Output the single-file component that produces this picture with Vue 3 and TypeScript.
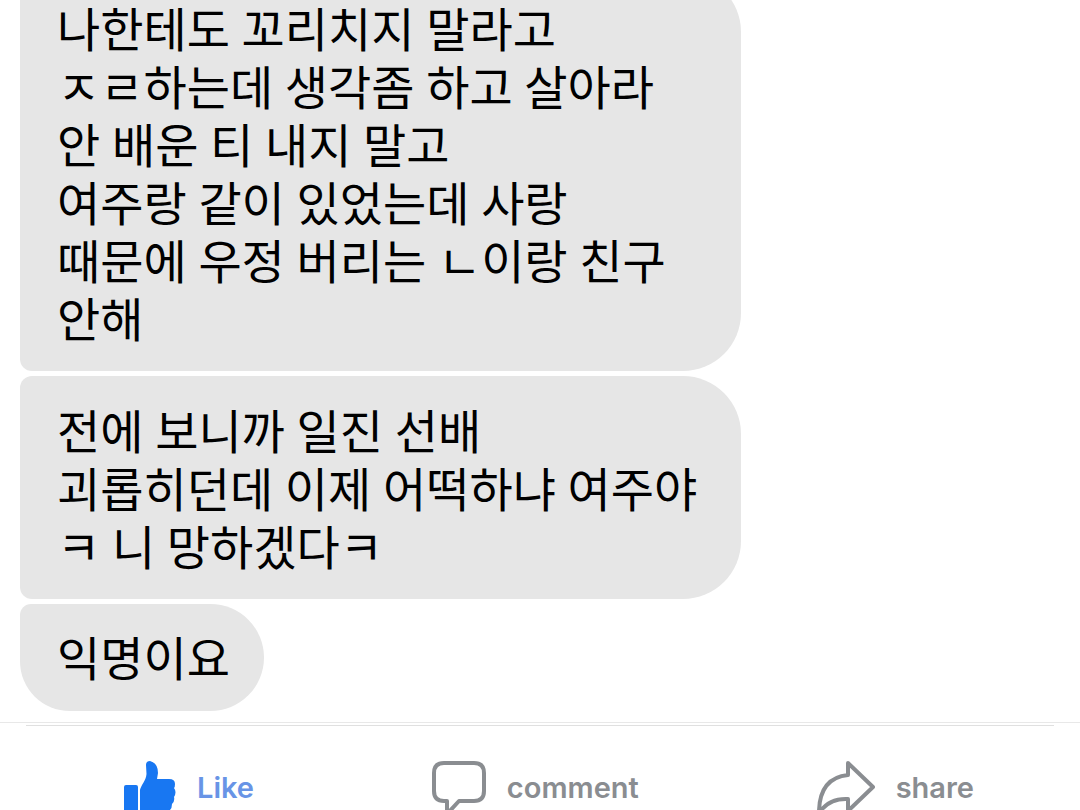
<script setup lang="ts">
interface Message {
  cls: string
  lines: string[]
}

const messages: Message[] = [
  {
    cls: 'first',
    lines: [
      '나한테도 꼬리치지 말라고',
      'ㅈㄹ하는데 생각좀 하고 살아라',
      '안 배운 티 내지 말고',
      '여주랑 같이 있었는데 사랑',
      '때문에 우정 버리는 ㄴ이랑 친구',
      '안해',
    ],
  },
  { cls: 'middle', lines: ['전에 보니까 일진 선배', '괴롭히던데 이제 어떡하냐 여주야', 'ㅋ 니 망하겠다ㅋ'] },
  { cls: 'last', lines: ['익명이요'] },
]
</script>

<template>
  <main class="post">
    <section class="thread">
      <p v-for="m in messages" :key="m.cls" class="bubble" :class="m.cls">
        <span v-for="line in m.lines" :key="line" class="line">{{ line }}</span>
      </p>
    </section>
    <footer class="actions">
      <button type="button" class="action like">
        <svg width="52" height="60" viewBox="0 0 52 60" aria-hidden="true">
          <path fill="#1877f2" d="M2 24h10q2 0 2 2v34H0V26q0-2 2-2zM16 60V29C17 24 22 20 22.500 13L22 4Q22 0 26 0Q34 2 34 12L33 18H45Q51 18 51 23Q51 26 50 27Q53 31 50 36Q51 40 48 43Q48 47 46 49Q46 58 37 58H26Q20 58 16 55z" />
        </svg>
        <span>Like</span>
      </button>
      <button type="button" class="action comment">
        <svg width="54" height="60" viewBox="0 0 54 60" aria-hidden="true">
          <path fill="none" stroke="#8a8d91" stroke-width="4" stroke-linejoin="round" d="M12 2h30q10 0 10 10v18q0 10-10 10H27L15 53V40h-3Q2 40 2 30V12Q2 2 12 2z" />
        </svg>
        <span>comment</span>
      </button>
      <button type="button" class="action share">
        <svg width="58" height="60" viewBox="0 0 58 60" aria-hidden="true">
          <path fill="none" stroke="#8a8d91" stroke-width="4" stroke-linejoin="round" d="M31 2L56 26L31 50V38Q12 37 2 52Q2 17 31 14z" />
        </svg>
        <span>share</span>
      </button>
    </footer>
  </main>
</template>

<style>
html, body { margin: 0; overflow: hidden; background: #fff; }
</style>

<style scoped>
.post { height: 100vh; overflow: hidden; font-family: Inter, "Liberation Sans", sans-serif; }
.thread { display: flex; flex-direction: column; align-items: flex-start; gap: 5px; margin-top: -26px; padding: 0 20px 11px; border-bottom: 1px solid #e8e8e8; }
.bubble { box-sizing: border-box; margin: 0; padding: 28px 37px 21px; background: #e6e6e6; color: #000; font-family: Roboto, "Noto Sans CJK KR", sans-serif; font-size: 47px; font-weight: 400; line-height: 58px; border-radius: 12px 58px 58px 12px; width: 721px; max-width: 100%; }
.line { display: block; white-space: nowrap; }
.last { width: auto; padding: 27px 34px 22px 37px; border-bottom-left-radius: 54px; }
.actions { display: flex; justify-content: space-between; margin: 2px 26px 0; padding: 35px 80px 0 98px; border-top: 1px solid #e0e0e0; }
.action { display: flex; align-items: flex-start; gap: 21px; border: 0; padding: 0; background: none; color: #8a8d91; font: 600 29px/54px Inter, sans-serif; }
.like { color: #6894e6; }
svg { display: block; }
</style>
